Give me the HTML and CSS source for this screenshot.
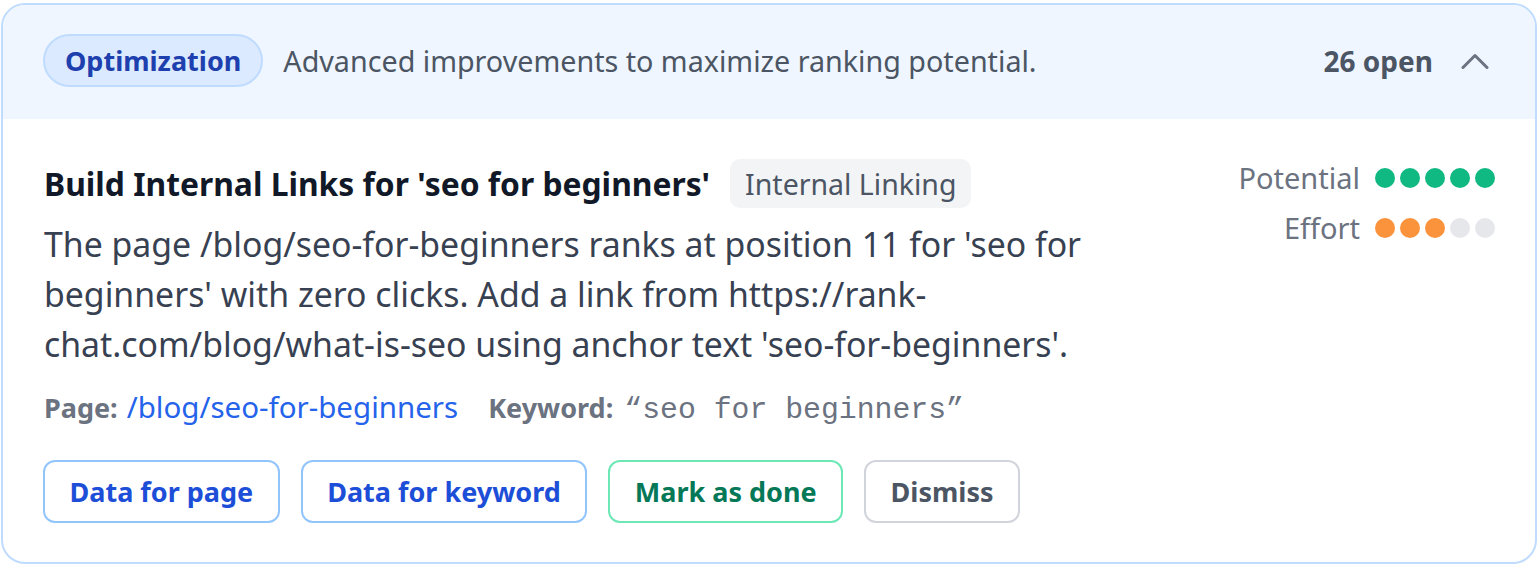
FILE: index.html
```html
<!DOCTYPE html>
<html lang="en">
<head>
<meta charset="utf-8">
<title>Optimization</title>
<link rel="stylesheet" href="styles.css">
</head>
<body>
<section class="card">
  <header class="card-head">
    <span class="badge">Optimization</span>
    <span class="head-desc">Advanced improvements to maximize ranking potential.</span>
    <span class="head-count">26 open</span>
    <svg class="chevron" width="28" height="16" viewBox="0 0 28 16" aria-hidden="true"><path d="M2 14.5 L14 2.5 L26 14.5" fill="none" stroke="#6b7280" stroke-width="3" stroke-linecap="round" stroke-linejoin="round"/></svg>
  </header>
  <div class="card-body">
    <div class="item">
      <div class="item-main">
        <div class="title-row">
          <h3 class="title">Build Internal Links for 'seo for beginners'</h3>
          <span class="tag">Internal Linking</span>
        </div>
        <p class="desc">The page /blog/seo-for-beginners ranks at position 11 for 'seo for beginners' with zero clicks. Add a link from https://rank-chat.com/blog/what-is-seo using anchor text 'seo-for-beginners'.</p>
        <div class="meta">
          <span class="meta-label">Page:</span>
          <a class="meta-link" href="#">/blog/seo-for-beginners</a>
          <span class="meta-label kw-label">Keyword:</span>
          <span class="kw">“seo for beginners”</span>
        </div>
        <div class="actions">
          <button class="btn btn-blue">Data for page</button>
          <button class="btn btn-blue">Data for keyword</button>
          <button class="btn btn-green">Mark as done</button>
          <button class="btn btn-gray">Dismiss</button>
        </div>
      </div>
      <div class="scores">
        <div class="score-row">
          <span class="score-label">Potential</span>
          <span class="dots"><i class="dot g"></i><i class="dot g"></i><i class="dot g"></i><i class="dot g"></i><i class="dot g"></i></span>
        </div>
        <div class="score-row">
          <span class="score-label">Effort</span>
          <span class="dots"><i class="dot o"></i><i class="dot o"></i><i class="dot o"></i><i class="dot e"></i><i class="dot e"></i></span>
        </div>
      </div>
    </div>
  </div>
</section>
</body>
</html>
```
FILE: styles.css
```css
* { box-sizing: border-box; }
html, body { margin: 0; padding: 0; background: #ffffff; }
body {
  padding: 3px 3px 3px 1px;
  font-family: "Noto Sans", "Open Sans", sans-serif;
  color: #111827;
}
.card {
  border: 2px solid #bfdbfe;
  border-radius: 24px;
  overflow: hidden;
  height: 561px;
  background: #fff;
}
.card-head {
  display: flex;
  align-items: center;
  background: #eff6ff;
  height: 114px;
  padding: 0 46px 3px 40px;
}
.badge {
  display: inline-flex;
  align-items: center;
  height: 53px;
  padding: 0 20px;
  border: 2px solid #bfdbfe;
  background: #dbeafe;
  border-radius: 999px;
  color: #1e40af;
  font-weight: 700;
  font-size: 27px;
}
.head-desc {
  margin-left: 20px;
  font-size: 28.7px;
  color: #4b5563;
  flex: 1;
}
.head-count {
  font-size: 28px;
  font-weight: 700;
  color: #4b5563;
  margin-right: 28px;
}
.chevron { display: block; margin-top: 0; }
.card-body {
  padding: 40px 40px 0 40px;
}
.item {
  display: flex;
  justify-content: space-between;
}
.item-main { flex: 1; }
.title-row {
  display: flex;
  align-items: center;
  gap: 20px;
  padding-left: 1px;
}
.title {
  margin: 0;
  font-size: 31.8px;
  font-weight: 700;
  color: #111827;
}
.tag {
  display: inline-flex;
  align-items: center;
  height: 49px;
  padding: 0 15px;
  background: #f3f4f6;
  border-radius: 10px;
  font-size: 28.5px;
  color: #4b5563;
}
.desc {
  margin: 11px 0 0 1px;
  max-width: 1100px;
  font-size: 33.8px;
  line-height: 50px;
  color: #374151;
}
.meta {
  margin-top: 17px;
  padding-left: 1px;
  display: flex;
  align-items: baseline;
  font-size: 27px;
}
.meta-label { font-weight: 700; color: #6b7280; }
.meta-link { margin-left: 9px; color: #2563eb; text-decoration: none; font-size: 29.5px; }
.kw-label { margin-left: 30px; }
.kw {
  margin-left: 11px;
  font-family: "Liberation Mono", monospace;
  font-size: 29.8px;
  color: #6b7280;
}
.actions {
  margin-top: 33px;
  display: flex;
  gap: 21px;
}
.btn {
  height: 63px;
  padding: 0 24.5px;
  border-radius: 12px;
  background: #fff;
  font-family: inherit;
  font-size: 27px;
  font-weight: 700;
  border: 2px solid;
}
.btn-blue { border-color: #93c5fd; color: #1d4ed8; }
.btn-green { border-color: #6ee7b7; color: #047857; }
.btn-gray { border-color: #d1d5db; color: #4b5563; }
.scores {
  display: flex;
  flex-direction: column;
  align-items: flex-end;
  gap: 12px;
  padding-top: 0;
}
.score-row {
  display: flex;
  align-items: center;
  gap: 15px;
}
.score-label { font-size: 29px; color: #6b7280; line-height: 38px; }
.dots { display: flex; gap: 5px; }
.dot { display: block; width: 20px; height: 20px; border-radius: 50%; }
.dot.g { background: #10b981; }
.dot.o { background: #fb923c; }
.dot.e { background: #e5e7eb; }
```
